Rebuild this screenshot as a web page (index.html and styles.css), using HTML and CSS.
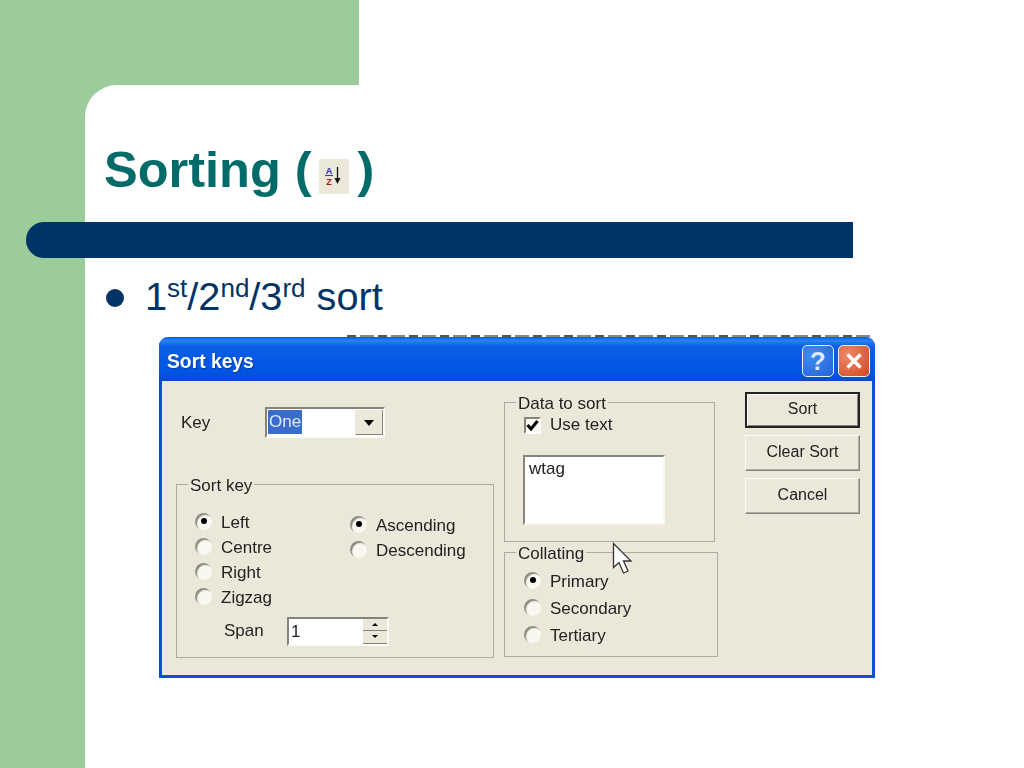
FILE: index.html
```html
<!DOCTYPE html>
<html lang="en">
<head>
<meta charset="utf-8">
<title>Sorting</title>
<link rel="stylesheet" href="styles.css">
</head>
<body>
<div class="slide">
  <main class="panel">
    <h1 class="title"><span>Sorting (</span><span class="sort-icon"><svg width="30" height="35" viewBox="0 0 30 35"><text x="10" y="15" class="ic ic-a">A</text><path d="M6 16.500h8" stroke="#3a3ab0" stroke-width="1.100"/><text x="10" y="25.500" class="ic ic-z">Z</text><path d="M18.500 8v13" stroke="#111" stroke-width="1.300"/><path d="M15.500 19h6l-3 6z" fill="#111"/></svg></span><span>)</span></h1>
    <div class="rule"></div>
    <div class="bullet"><span class="dot"></span><span>1<sup>st</sup>/2<sup>nd</sup>/3<sup>rd</sup> sort</span></div>

    <section class="dialog">
      <div class="fragments"></div>
      <header class="titlebar">
        <span class="caption">Sort keys</span>
        <span class="tb-btn help">?</span>
        <span class="tb-btn close"><svg width="20" height="20" viewBox="0 0 20 20"><path d="M3.500 3.500l13 13M16.500 3.500l-13 13" stroke="#fff" stroke-width="3.400"/></svg></span>
      </header>
      <div class="body">
        <div class="col-left">
          <div class="key-row">
            <span class="key-label">Key</span>
            <span class="combo"><span class="combo-val"><span class="sel">One</span></span><span class="combo-arrow"><i></i></span></span>
          </div>
          <fieldset class="group sort-group">
            <legend>Sort key</legend>
            <div class="sort-cols">
              <div class="radios r-left">
                <label class="radio-row"><span class="radio on"></span>Left</label>
                <label class="radio-row"><span class="radio"></span>Centre</label>
                <label class="radio-row"><span class="radio"></span>Right</label>
                <label class="radio-row"><span class="radio"></span>Zigzag</label>
              </div>
              <div class="radios r-order">
                <label class="radio-row"><span class="radio on"></span>Ascending</label>
                <label class="radio-row"><span class="radio"></span>Descending</label>
              </div>
            </div>
            <div class="span-row">
              <span class="span-label">Span</span>
              <span class="spin"><span class="spin-val">1</span><span class="spin-btns"><b><i class="up"></i></b><b><i class="down"></i></b></span></span>
            </div>
          </fieldset>
        </div>
        <div class="col-mid">
          <fieldset class="group data-group">
            <legend>Data to sort</legend>
            <label class="check-row"><span class="check"><svg width="13" height="13" viewBox="0 0 13 13"><path d="M1.500 6l3.500 4 6.500-8" fill="none" stroke="#000" stroke-width="3"/></svg></span>Use text</label>
            <div class="textbox">wtag</div>
          </fieldset>
          <fieldset class="group coll-group">
            <legend>Collating</legend>
            <div class="radios r-coll">
              <label class="radio-row"><span class="radio on"></span>Primary</label>
              <label class="radio-row"><span class="radio"></span>Secondary</label>
              <label class="radio-row"><span class="radio"></span>Tertiary</label>
            </div>
          </fieldset>
        </div>
        <div class="col-right">
          <span class="btn default">Sort</span>
          <span class="btn">Clear Sort</span>
          <span class="btn">Cancel</span>
        </div>
      </div>
      <svg class="cursor" width="22" height="34" viewBox="0 0 22 34"><path d="M1.500 1.500v24l5.500-5 4.500 10.500 4.500-2-4.500-10h7.500z" fill="#fff" stroke="#333" stroke-width="1.300"/></svg>
    </section>
  </main>
</div>
</body>
</html>
```
FILE: styles.css
```css
html, body { margin: 0; padding: 0; }
body { width: 1024px; height: 768px; overflow: hidden; background: #fff; font-family: "Liberation Sans", Arial, sans-serif; }
.slide {
  width: 1024px; height: 768px; padding: 85px 0 0 85px; box-sizing: border-box;
  background:
    linear-gradient(#9ccc9a, #9ccc9a) 0 0 / 359px 120px no-repeat,
    linear-gradient(#9ccc9a, #9ccc9a) 0 0 / 85px 768px no-repeat,
    #fff;
}
.panel {
  height: 683px; background: #fff; border-top-left-radius: 32px; padding: 55px 0 0 19px; box-sizing: border-box;
}
.title { margin: 0; height: 60px; line-height: 62px; font-size: 50.500px; font-weight: 700; color: #006b68; display: flex; align-items: center; }
.sort-icon { width: 30px; height: 35px; background: #ebe8da; margin: 12px 9px 0 7px; display: block; }
.sort-icon svg { display: block; }
.ic { font: 700 9px "Liberation Sans", sans-serif; text-anchor: middle; }
.ic-a { fill: #2a2aa8; }
.ic-z { fill: #a01818; }
.rule { height: 36px; margin: 22px 171px 0 -78px; background: #003366; border-radius: 18px 0 0 18px; }
.bullet { height: 44px; margin-top: 16px; display: flex; align-items: center; gap: 21px; font-size: 39.700px; line-height: 44px; color: #003366; padding-left: 2px; }
.dot { width: 18px; height: 18px; border-radius: 50%; background: #003366; flex: none; margin-top: 3px; }
.bullet sup { font-size: 26px; line-height: 0; vertical-align: 13px; }

.dialog {
  position: relative; width: 716px; height: 341px; margin: 19px 0 0 55px; box-sizing: border-box;
  border: 3px solid #0a50dc; border-top: 0; border-radius: 9px 9px 0 0; background: #ebe8da;
  font-size: 17px; color: #222; filter: blur(.4px);
}
.fragments { position: absolute; left: 185px; right: 2px; top: -2px; height: 2px; background: repeating-linear-gradient(90deg, #555 0 9px, #fff 9px 13px, #888 13px 27px, #fff 27px 31px); }
.titlebar {
  height: 44px; margin: 0 -3px; padding: 8px 5px 0 8px; box-sizing: border-box; display: flex; align-items: flex-start; gap: 4px; border-radius: 9px 9px 0 0;
  background: linear-gradient(#0a5cd8 0, #2b82f2 8%, #0a5fe6 22%, #0055e3 80%, #0a4bcd 100%);
}
.caption { flex: 1; font-size: 19.300px; font-weight: 700; color: #fff; line-height: 34px; text-shadow: 1px 1px 1px #0a3a9a; }
.tb-btn { width: 32px; height: 32px; box-sizing: border-box; border: 1px solid #e8eefc; border-radius: 5px; display: flex; align-items: center; justify-content: center; color: #dfeaff; }
.help { background: radial-gradient(circle at 30% 30%, #3f8cf3, #2563d8); font-size: 26px; font-weight: 700; }
.close { background: radial-gradient(circle at 30% 30%, #ec8a6c, #d4471f); }

.body { display: grid; grid-template-columns: 318px 214px 115px; column-gap: 10px; padding: 12px 0 0 14px; }
.col-right { margin-left: 17px; display: flex; flex-direction: column; gap: 7px; width: 115px; margin-top: -1px; }

.group { margin: 0; padding: 0; border: 1px solid #aeaca2; box-sizing: border-box; min-width: 0; }
.group legend { margin-left: 11px; padding: 0 2px; line-height: 18px; height: 18px; transform: translateY(2px); }

.key-row { display: flex; align-items: center; margin-top: 14px; height: 31px; }
.key-label { width: 89px; padding-left: 5px; box-sizing: border-box; }
.combo { width: 120px; height: 31px; box-sizing: border-box; display: flex; background: #fff; border: 2px solid; border-color: #85837a #fbfbf6 #fbfbf6 #85837a; padding: 1px 0 1px 1px; }
.combo-val { flex: 1; line-height: 24px; }
.sel { background: #3a6ccc; color: #dfe8ff; display: inline-block; height: 24px; padding: 0 1px; }
.combo-arrow { width: 26px; background: #ebe8da; border: 1px solid; border-color: #ebe8da #85837a #85837a #ebe8da; display: flex; align-items: center; justify-content: center; }
.combo-arrow i { border: 5px solid transparent; border-top: 6px solid #000; border-bottom: 0; }

.sort-group { height: 183px; margin-top: 37px; }
.sort-cols { display: flex; padding: 17px 0 0 18px; }
.radios { display: flex; flex-direction: column; }
.radio-row { display: flex; align-items: center; gap: 9px; height: 25px; line-height: 25px; }
.radio { width: 17px; height: 17px; border-radius: 50%; background: #f8f7f0; box-shadow: inset 2px 2px 1px #8f8d84; display: flex; align-items: center; justify-content: center; flex: none; margin-top: -3px; }
.radio.on::after { content: ""; width: 6px; height: 6px; border-radius: 50%; background: #000; }
.r-left { width: 155px; }
.r-order { padding-top: 3px; }
.span-row { display: flex; align-items: center; padding: 7px 0 0 47px; height: 28px; }
.span-label { width: 63px; }
.spin { width: 102px; height: 29px; box-sizing: border-box; display: flex; background: #fff; border: 2px solid; border-color: #85837a #fbfbf6 #fbfbf6 #85837a; padding-left: 2px; line-height: 25px; }
.spin-val { flex: 1; }
.spin-btns { width: 24px; display: flex; flex-direction: column; }
.spin-btns b { flex: 1; background: #ebe8da; border-bottom: 1px solid #85837a; display: flex; align-items: center; justify-content: center; }
.up { border: 3px solid transparent; border-bottom: 3px solid #000; border-top: 0; }
.down { border: 3px solid transparent; border-top: 3px solid #000; border-bottom: 0; }

.data-group { width: 211px; height: 149px; }
.check-row { display: flex; align-items: center; gap: 9px; height: 18px; padding: 5px 0 0 19px; }
.check { width: 17px; height: 17px; box-sizing: border-box; background: #fbfaf4; border: 2px solid; border-color: #85837a #fff #fff #85837a; display: flex; align-items: center; justify-content: center; }
.textbox { width: 142px; height: 70px; box-sizing: border-box; margin: 21px 0 0 18px; background: #fff; border: 2px solid; border-color: #85837a #f7f6ee #f7f6ee #85837a; padding: 1px 4px; line-height: 21px; }
.coll-group { height: 114px; margin-top: 1px; }
.r-coll { padding: 8px 0 0 19px; gap: 2px; }

.btn { height: 36px; box-sizing: border-box; display: flex; align-items: center; justify-content: center; background: #ebe8da; border: 1px solid; border-color: #fbfbf5 #85837a #85837a #fbfbf5; box-shadow: inset -1px -1px #aeaca2; font-size: 16px; padding-bottom: 2px; }
.btn.default { border: 2px solid #222; box-shadow: inset 1px 1px #fff, inset -1px -1px #85837a; }

.cursor { position: absolute; left: 450px; top: 205px; }
```
